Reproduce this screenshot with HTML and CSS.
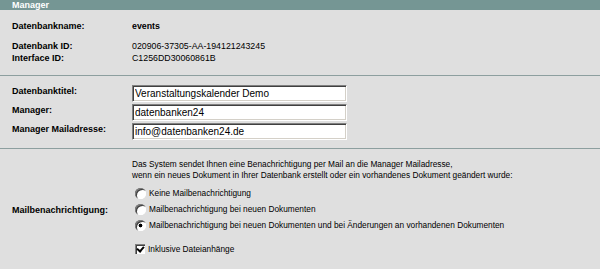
FILE: index.html
```html
<!DOCTYPE html>
<html lang="de">
<head>
  <meta charset="UTF-8">
  <title>Manager</title>
  <link rel="stylesheet" href="styles.css">
</head>
<body>
  <div class="panel">
    <div class="panel-title">Manager</div>

    <div class="section info">
      <div class="label">Datenbankname:</div>
      <div class="value strong">events</div>
      <div class="label spaced">Datenbank ID:</div>
      <div class="value spaced">020906-37305-AA-194121243245</div>
      <div class="label">Interface ID:</div>
      <div class="value">C1256DD30060861B</div>
    </div>

    <div class="section fields">
      <label class="label" for="titel">Datenbanktitel:</label>
      <input class="field" type="text" id="titel" value="Veranstaltungskalender Demo">
      <label class="label" for="manager">Manager:</label>
      <input class="field" type="text" id="manager" value="datenbanken24">
      <label class="label" for="mail">Manager Mailadresse:</label>
      <input class="field" type="text" id="mail" value="info@datenbanken24.de">
    </div>

    <div class="section notify">
      <div class="label notify-label">Mailbenachrichtigung:</div>
      <div class="notify-body">
        <p class="hint">Das System sendet Ihnen eine Benachrichtigung per Mail an die Manager Mailadresse,<br>
        wenn ein neues Dokument in Ihrer Datenbank erstellt oder ein vorhandenes Dokument geändert wurde:</p>
        <div class="options">
          <label class="option"><input type="radio" name="benachrichtigung" value="keine">Keine Mailbenachrichtigung</label>
          <label class="option"><input type="radio" name="benachrichtigung" value="neu">Mailbenachrichtigung bei neuen Dokumenten</label>
          <label class="option"><input type="radio" name="benachrichtigung" value="alle" checked>Mailbenachrichtigung bei neuen Dokumenten und bei Änderungen an vorhandenen Dokumenten</label>
        </div>
        <label class="option attach"><input type="checkbox" checked>Inklusive Dateianhänge</label>
      </div>
    </div>
  </div>
</body>
</html>
```

FILE: styles.css
```css
/* Manager Einstellungen */
body {
  margin: 0;
  font-family: Arial, "Liberation Sans", sans-serif;
  font-size: 9px;
  color: #000;
  background: #dfdfdf;
}
.panel {
  width: 600px;
  height: 269px;
  background: #dfdfdf;
  overflow: hidden;
}
.panel-title {
  height: 10px;
  line-height: 10px;
  padding-left: 12px;
  background: #759694;
  color: #fff;
  font-weight: bold;
}
.section {
  display: grid;
  grid-template-columns: 120px 1fr;
  padding-left: 12px;
  border-bottom: 1px solid #8d9f9f;
}
.label {
  font-weight: bold;
  line-height: 12px;
}
.value {
  line-height: 12px;
  font-size: 8.8px;
}
.strong {
  font-weight: bold;
}

/* Datenbank Infos */
.info {
  padding: 10px 0 12px 12px;
  height: 43px;
  align-content: start;
}
.info .spaced {
  margin-top: 8px;
}

/* Eingabefelder */
.fields {
  padding-top: 9px;
  height: 63px;
  row-gap: 2px;
  align-content: start;
}
.field {
  width: 215px;
  height: 17px;
  box-sizing: border-box;
  margin: 0;
  padding: 0 2px;
  font-family: Arial, "Liberation Sans", sans-serif;
  font-size: 10px;
  color: #000;
  background: #fff;
  border-top: 1px solid #808080;
  border-left: 1px solid #808080;
  border-bottom: 1px solid #fff;
  border-right: 1px solid #fff;
  box-shadow: inset 1px 1px 0 #404040, inset -1px -1px 0 #d4d0c8;
  outline: none;
}

/* Mailbenachrichtigung */
.notify {
  border-bottom: none;
  padding-top: 10px;
}
.notify-label {
  align-self: center;
  margin-top: 4px;
}
.notify-body {
  font-size: 8.3px;
}
.hint {
  margin: 0;
  line-height: 11px;
}
.options {
  margin-top: 4px;
  margin-left: 3px;
}
.option {
  display: flex;
  align-items: center;
  height: 16px;
  line-height: 16px;
}
.option input {
  appearance: none;
  -webkit-appearance: none;
  width: 11px;
  height: 11px;
  margin: 0 3px 0 0;
  background: #fff;
  flex: none;
}
.option input[type="radio"] {
  border-radius: 50%;
  box-shadow: inset 1px 1px 0 #808080, inset 2px 2px 0 #404040, inset -1px -1px 0 #fff;
}
.option input[type="radio"]:checked {
  background: radial-gradient(circle, #000 0, #000 1.6px, #fff 2.2px);
}
.attach {
  margin-top: 8px;
  margin-left: 3px;
}
.option input[type="checkbox"] {
  position: relative;
  width: 10px;
  height: 10px;
  box-shadow: inset 1px 1px 0 #808080, inset 2px 2px 0 #404040, inset -1px -1px 0 #fff;
}
.option input[type="checkbox"]:checked::after {
  content: "";
  position: absolute;
  left: 3px;
  top: 1px;
  width: 3px;
  height: 5px;
  border-right: 2px solid #000;
  border-bottom: 2px solid #000;
  transform: rotate(40deg);
}
```
